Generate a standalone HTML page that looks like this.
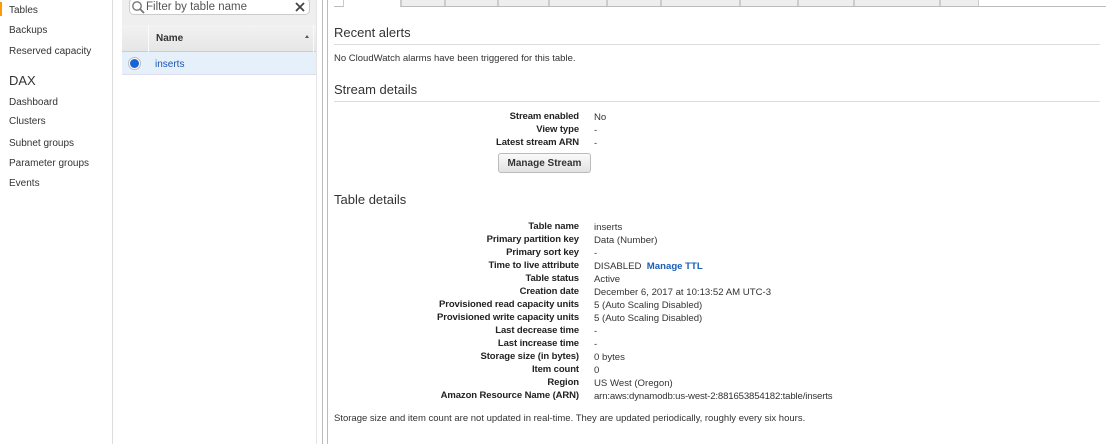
<!DOCTYPE html>
<html><head><meta charset="utf-8"><style>
*{margin:0;padding:0;box-sizing:border-box}
body{width:1106px;height:444px;overflow:hidden;background:#fff;font-family:"Liberation Sans",Arial,sans-serif;font-size:10px;color:#333;position:relative}
.a{position:absolute;white-space:nowrap}
.nav{left:9px;font-size:10px;color:#333}
.tab{position:absolute;top:-6px;height:12px;background:#eee;border:1px solid #ccc;border-bottom:none}
.lbl{position:absolute;right:527px;font-weight:bold;color:#222;white-space:nowrap;font-size:9.5px;letter-spacing:-0.1px;margin-top:-1px}
.val{position:absolute;left:594px;white-space:nowrap;color:#333;font-size:9.6px}
h2{position:absolute;left:334px;font-size:13px;font-weight:normal;color:#333}
.hr{position:absolute;left:334px;width:766px;height:1px;background:#ddd}
</style></head><body>
<div class="a" style="left:0;top:2px;width:2px;height:14px;background:#f90"></div>
<div class="a nav" style="top:5px">Tables</div>
<div class="a nav" style="top:25px">Backups</div>
<div class="a nav" style="top:46px">Reserved capacity</div>
<div class="a nav" style="top:73px;font-size:13px">DAX</div>
<div class="a nav" style="top:97px">Dashboard</div>
<div class="a nav" style="top:116px">Clusters</div>
<div class="a nav" style="top:138px">Subnet groups</div>
<div class="a nav" style="top:158px">Parameter groups</div>
<div class="a nav" style="top:178px">Events</div>
<div class="a" style="left:112px;top:0;width:1px;height:444px;background:#ddd"></div>
<div class="a" style="left:122px;top:0;width:194px;height:51px;background:#efefef"></div>
<div class="a" style="left:129px;top:-2px;width:181px;height:17px;background:#fff;border:1px solid #ccc;border-radius:5px"></div>
<svg class="a" style="left:131px;top:0" width="14" height="14" viewBox="0 0 14 14"><circle cx="6" cy="6" r="4.2" fill="none" stroke="#777" stroke-width="1.4"/><path d="M9 9l4 4" stroke="#777" stroke-width="1.8"/></svg>
<div class="a" style="left:146px;top:1px;font-size:11.5px;color:#555">Filter by table name</div>
<svg class="a" style="left:295px;top:2px" width="10" height="10"><path d="M1 1l8 8M9 1l-8 8" stroke="#444" stroke-width="1.8"/></svg>
<div class="a" style="left:122px;top:25px;width:194px;height:27px;background:linear-gradient(#f2f2f2,#e6e6e6);border-bottom:1px solid #ccc"></div>
<div class="a" style="left:148px;top:25px;width:1px;height:27px;background:#fafafa"></div>
<div class="a" style="left:313px;top:25px;width:1px;height:27px;background:#fafafa"></div>
<div class="a" style="left:156px;top:33px;font-weight:bold;color:#333">Name</div>
<div class="a" style="left:305px;top:35px;border:2.5px solid transparent;border-bottom:3px solid #555;border-top:none;width:0"></div>
<div class="a" style="left:122px;top:52px;width:194px;height:23px;background:#e6f0fb;border-bottom:1px solid #dde"></div>
<div class="a" style="left:128px;top:57px;width:13px;height:13px;border-radius:50%;background:#fff;border:1px solid #bbb"></div>
<div class="a" style="left:130px;top:59px;width:9px;height:9px;border-radius:50%;background:#1665d8"></div>
<div class="a" style="left:155px;top:59px;color:#1a55b0">inserts</div>
<div class="a" style="left:316px;top:0;width:1px;height:444px;background:#e4e4e4"></div>
<div class="a" style="left:322px;top:0;width:1px;height:444px;background:#bbb"></div>
<div class="a" style="left:327px;top:0;width:1px;height:444px;background:#bbb"></div>
<div class="a" style="left:334px;top:6px;width:772px;height:1px;background:#bbb"></div>
<div class="tab" style="left:401px;width:44px"></div>
<div class="tab" style="left:445px;width:53px"></div>
<div class="tab" style="left:498px;width:51px"></div>
<div class="tab" style="left:549px;width:58px"></div>
<div class="tab" style="left:607px;width:54px"></div>
<div class="tab" style="left:661px;width:79px"></div>
<div class="tab" style="left:740px;width:58px"></div>
<div class="tab" style="left:798px;width:56px"></div>
<div class="tab" style="left:854px;width:86px"></div>
<div class="tab" style="left:940px;width:39px"></div>
<div class="a" style="left:343px;top:-2px;width:58px;height:9px;background:#fff;border-right:1px solid #ccc;border-left:1px solid #ccc"></div>
<h2 style="top:25px">Recent alerts</h2>
<div class="hr" style="top:44px"></div>
<div class="a" style="left:334px;top:53px;color:#333;font-size:9.5px">No CloudWatch alarms have been triggered for this table.</div>
<h2 style="top:82px">Stream details</h2>
<div class="hr" style="top:101px"></div>
<div class="lbl" style="top:112px">Stream enabled</div><div class="val" style="top:112px">No</div>
<div class="lbl" style="top:125px">View type</div><div class="val" style="top:125px">-</div>
<div class="lbl" style="top:138px">Latest stream ARN</div><div class="val" style="top:138px">-</div>
<div class="a" style="left:498px;top:153px;width:93px;height:20px;border:1px solid #bbb;border-radius:3px;background:linear-gradient(#fafafa,#e2e2e2);text-align:center;line-height:19px;font-weight:bold;color:#333">Manage Stream</div>
<h2 style="top:192px">Table details</h2>
<div class="lbl" style="top:222px">Table name</div><div class="val" style="top:222px">inserts</div>
<div class="lbl" style="top:235px">Primary partition key</div><div class="val" style="top:235px">Data (Number)</div>
<div class="lbl" style="top:248px">Primary sort key</div><div class="val" style="top:248px">-</div>
<div class="lbl" style="top:261px">Time to live attribute</div><div class="val" style="top:261px">DISABLED &nbsp;<b style="color:#1a5fb4">Manage TTL</b></div>
<div class="lbl" style="top:274px">Table status</div><div class="val" style="top:274px">Active</div>
<div class="lbl" style="top:287px">Creation date</div><div class="val" style="top:287px">December 6, 2017 at 10:13:52 AM UTC-3</div>
<div class="lbl" style="top:300px">Provisioned read capacity units</div><div class="val" style="top:300px">5 (Auto Scaling Disabled)</div>
<div class="lbl" style="top:313px">Provisioned write capacity units</div><div class="val" style="top:313px">5 (Auto Scaling Disabled)</div>
<div class="lbl" style="top:326px">Last decrease time</div><div class="val" style="top:326px">-</div>
<div class="lbl" style="top:339px">Last increase time</div><div class="val" style="top:339px">-</div>
<div class="lbl" style="top:352px">Storage size (in bytes)</div><div class="val" style="top:352px">0 bytes</div>
<div class="lbl" style="top:365px">Item count</div><div class="val" style="top:365px">0</div>
<div class="lbl" style="top:378px">Region</div><div class="val" style="top:378px">US West (Oregon)</div>
<div class="lbl" style="top:391px">Amazon Resource Name (ARN)</div><div class="val" style="top:391px;letter-spacing:-0.15px">arn:aws:dynamodb:us-west-2:881653854182:table/inserts</div>
<div class="a" style="left:334px;top:413px;font-size:9.5px">Storage size and item count are not updated in real-time. They are updated periodically, roughly every six hours.</div>
</body></html>
